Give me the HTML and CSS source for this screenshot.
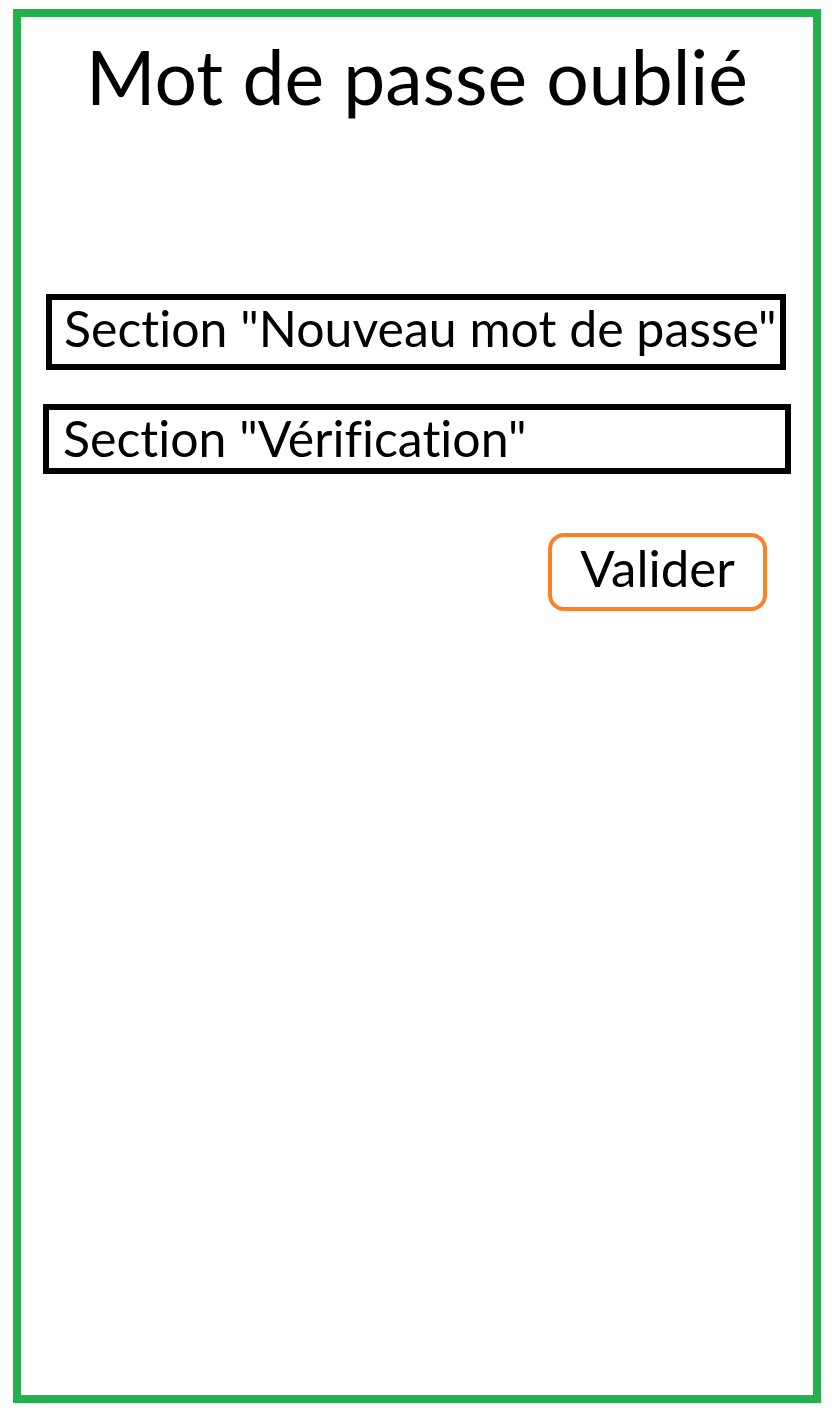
FILE: index.html
```html
<!DOCTYPE html>
<html lang="fr">
<head>
<meta charset="utf-8">
<title>Mot de passe oublié</title>
<link rel="stylesheet" href="styles.css">
</head>
<body>
<div class="frame">
  <h1 class="title">Mot de passe oublié</h1>
  <div class="section section-new">Section "Nouveau mot de passe"</div>
  <div class="section section-verif">Section "Vérification"</div>
  <div class="actions">
    <button class="btn">Valider</button>
  </div>
</div>
</body>
</html>
```

FILE: styles.css
```css
html, body {
  margin: 0;
  padding: 0;
  background: #ffffff;
}
body {
  font-family: "Lato", "Open Sans", sans-serif;
  font-variant-ligatures: none;
  color: #000;
}
.frame {
  box-sizing: border-box;
  width: 808px;
  height: 1394px;
  margin: 9px 0 0 13px;
  border: 8px solid #22b14c;
  display: flex;
  flex-direction: column;
}
.title {
  margin: 14px 0 0;
  font-size: 75px;
  font-weight: 400;
  line-height: 90px;
  text-align: center;
}
.section {
  box-sizing: border-box;
  border: 6px solid #000;
  font-size: 50px;
  line-height: 56px;
  padding-top: 0;
}
.section-new {
  margin: 173px 0 0 25px;
  width: 740px;
  height: 76px;
  padding-left: 12px;
}
.section-verif {
  margin: 34px 0 0 22px;
  width: 748px;
  height: 70px;
  padding-left: 14px;
}
.actions {
  display: flex;
  justify-content: flex-end;
  margin: 59px 46px 0 0;
}
.btn {
  box-sizing: border-box;
  width: 219px;
  height: 78px;
  border: 4px solid #ff7f27;
  border-radius: 16px;
  background: #fff;
  font-family: inherit;
  font-variant-ligatures: none;
  font-size: 51px;
  line-height: 61px;
  color: #000;
  padding: 0 0 14px;
}
```
